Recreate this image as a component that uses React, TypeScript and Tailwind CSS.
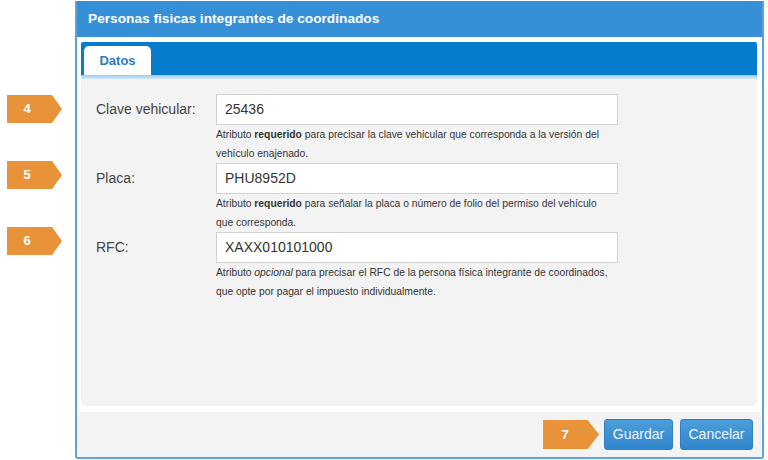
import React from "react";

function Badge({ n, className }: { n: string; className?: string }) {
  return (
    <div
      className={
        "h-[28px] w-[55px] bg-[#e8923a] [clip-path:polygon(0_0,82%_0,100%_50%,82%_100%,0_100%)] flex items-center " +
        (className ?? "")
      }
    >
      <span className="w-[40px] text-center text-white font-bold text-[13px]">{n}</span>
    </div>
  );
}

function Row({
  label,
  value,
  help,
}: {
  label: string;
  value: string;
  help: React.ReactNode;
}) {
  return (
    <div className="grid grid-cols-[120px_402px]">
      <div className="h-[31px] flex items-center text-[14px] text-[#444]">{label}</div>
      <div className="h-[31px] bg-white border border-[#d2d2d2] flex items-center px-[8px] text-[14px] text-[#333]">
        {value}
      </div>
      <div />
      <div className="text-[10.3px] leading-[19px] text-[#333] whitespace-nowrap">{help}</div>
    </div>
  );
}

export default function App() {
  return (
    <div
      className="relative w-[768px] h-[460px] bg-white overflow-hidden"
      style={{ fontFamily: '"Liberation Sans", Arial, sans-serif' }}
    >
      <div className="ml-[75px] mt-[1px] w-[689px] h-[458px] flex flex-col bg-white border-x-2 border-b-2 border-[#5ea2dc] rounded-b-[3px]">
        <div className="h-[36px] shrink-0 bg-[#3590d8] flex items-center pl-[11px] text-white font-bold text-[13.7px]">
          Personas fisicas integrantes de coordinados
        </div>
        <div className="pt-[5px] pl-[4px] pr-[5px] flex flex-col">
          <div className="h-[33px] bg-[#077bcc] flex items-end pl-[3px] rounded-t-[2px]">
            <div className="h-[29px] w-[67px] bg-white rounded-t-[5px] flex items-center justify-center text-[13px] font-bold text-[#2b7bc3]">
              Datos
            </div>
          </div>
          <div className="h-[4px] bg-gradient-to-b from-[#9cc9ee] to-[#d6e9f8]" />
          <div className="h-[327px] bg-[#f3f3f3] rounded-b-[5px] pt-[15px] pl-[15px] flex flex-col">
            <Row
              label="Clave vehicular:"
              value="25436"
              help={
                <>
                  <div>
                    Atributo <b>requerido</b> para precisar la clave vehicular que corresponda a la versión del
                  </div>
                  <div>vehículo enajenado.</div>
                </>
              }
            />
            <Row
              label="Placa:"
              value="PHU8952D"
              help={
                <>
                  <div>
                    Atributo <b>requerido</b> para señalar la placa o número de folio del permiso del vehículo
                  </div>
                  <div>que corresponda.</div>
                </>
              }
            />
            <Row
              label="RFC:"
              value="XAXX010101000"
              help={
                <>
                  <div>
                    Atributo <i>opcional</i> para precisar el RFC de la persona física integrante de coordinados,
                  </div>
                  <div>que opte por pagar el impuesto individualmente.</div>
                </>
              }
            />
          </div>
        </div>
        <div className="mt-[6px] mx-[1px] h-[45px] bg-[#f3f3f3] rounded-[3px] flex items-center justify-end pr-[8px]">
          <div className="h-[29px] w-[56px] bg-[#e8923a] [clip-path:polygon(0_0,80%_0,100%_50%,80%_100%,0_100%)] flex items-center mr-[5px]">
            <span className="w-[44px] text-center text-white font-bold text-[13px]">7</span>
          </div>
          <button className="h-[31px] w-[69px] rounded-[3px] border border-[#2f7fc2] bg-gradient-to-b from-[#4c9ddb] to-[#2f86ca] text-[#eef5fc] text-[14px]">
            Guardar
          </button>
          <button className="ml-[7px] h-[31px] w-[73px] rounded-[3px] border border-[#2f7fc2] bg-gradient-to-b from-[#4c9ddb] to-[#2f86ca] text-[#eef5fc] text-[14px]">
            Cancelar
          </button>
        </div>
      </div>

      <Badge n="4" className="absolute left-[7px] top-[95px]" />
      <Badge n="5" className="absolute left-[7px] top-[161px]" />
      <Badge n="6" className="absolute left-[7px] top-[227px]" />
    </div>
  );
}
